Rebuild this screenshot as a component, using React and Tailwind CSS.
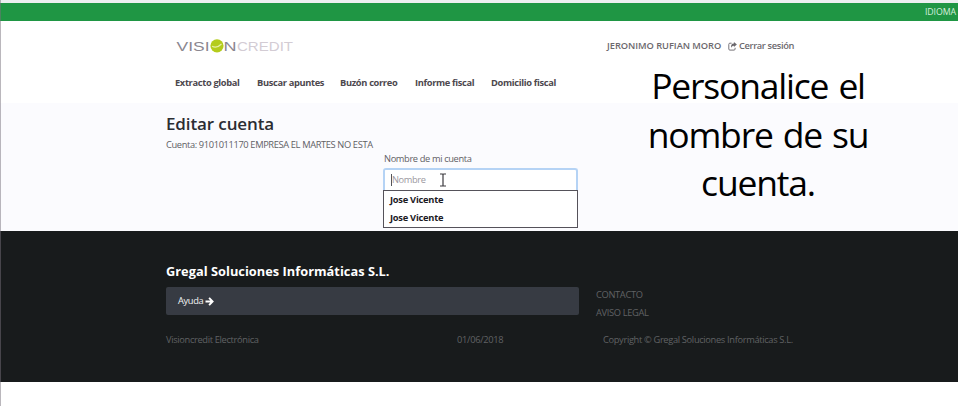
const navItems = [
  { label: "Extracto global", box: "w-[82px]" },
  { label: "Buscar apuntes", box: "w-[83px]" },
  { label: "Buzón correo", box: "w-[75px]" },
  { label: "Informe fiscal", box: "w-[76px]" },
  { label: "Domicilio fiscal", box: "w-[80px]" },
];

function Logo() {
  return (
    <svg className="block h-[20px] w-[120px]" viewBox="0 0 120 20" fontFamily="'Liberation Sans', sans-serif">
      <text x="1.5" y="14.6" fontSize="13.5" fill="#8b8790" textLength="33" lengthAdjust="spacingAndGlyphs">VISI</text>
      <circle cx="42" cy="9.8" r="6.6" fill="#b4cc1c" />
      <path d="M37 10.2 Q42 12.6 46.5 8" fill="none" stroke="#e6efa6" strokeWidth="1.2" />
      <text x="48.5" y="14.6" fontSize="13.5" fill="#8b8790" textLength="13" lengthAdjust="spacingAndGlyphs">N</text>
      <text x="62" y="14.6" fontSize="13.5" fill="#d3ccd4" textLength="56" lengthAdjust="spacingAndGlyphs">CREDIT</text>
    </svg>
  );
}

function ShareIcon() {
  return (
    <svg className="mr-[2px] h-[9px] w-[9px]" viewBox="0 0 9 9" fill="none">
      <path d="M3.6 1.2H1.9Q.8 1.2.8 2.3V7Q.8 8.1 1.9 8.1H6Q7.1 8.1 7.1 7V5.8" stroke="#77747a" strokeWidth="1" />
      <path d="M5.9 0 8.9 2.6 5.9 5.1V3.7Q4 3.6 3.3 5.7 2.3 1.8 5.9 1.5Z" fill="#6b686d" />
    </svg>
  );
}

function ArrowIcon() {
  return (
    <svg className="ml-[2px] h-[9px] w-[9px]" viewBox="0 0 9 9" fill="none" stroke="#ffffff" strokeWidth="1.9">
      <path d="M.5 4.5H7.4M4.1 .9 7.6 4.5 4.1 8.1" />
    </svg>
  );
}

function Header() {
  return (
    <header className="h-[82px] bg-white pl-[175px]">
      <div className="flex h-[50px] items-center">
        <Logo />
        <div className="ml-[312px] flex items-center text-[9.3px] font-semibold text-[#6b686d]">
          <span className="w-[121px] tracking-[-0.05px]">JERONIMO RUFIAN MORO</span>
          <ShareIcon />
          <span className="tracking-[-0.36px]">Cerrar sesión</span>
        </div>
      </div>
      <nav className="flex h-[24px] items-center text-[9.3px] font-bold tracking-[-0.34px] text-[#4d484e]">
        {navItems.map((item) => (
          <span key={item.label} className={item.box}>{item.label}</span>
        ))}
      </nav>
    </header>
  );
}

function AccountForm() {
  return (
    <main className="h-[128px] bg-[#fbfbfe] pl-[166px]">
      <h1 className="pt-[7px] text-[17px] leading-[27px] font-semibold tracking-[-0.12px] text-[#2b2d33]">Editar cuenta</h1>
      <p className="h-[15px] text-[9.3px] leading-[16px] tracking-[-0.37px] text-[#5f6065]">Cuenta: 9101011170 EMPRESA EL MARTES NO ESTA</p>
      <div className="ml-[217px] w-[195px]">
        <label className="block h-[16px] pl-px text-[9.3px] leading-[13px] tracking-[-0.37px] text-[#5f6065]">Nombre de mi cuenta</label>
        <div className="relative flex h-[22px] items-center rounded-t-[3px] border-2 border-b-0 border-[#b5d3f5] bg-white pl-[6px]">
          <span className="h-[12px] w-px bg-[#55555a]" />
          <span className="text-[9.3px] tracking-[-0.4px] text-[#9b98a0]">Nombre</span>
          <svg className="absolute top-[3px] left-[54px] h-[14px] w-[8px]" viewBox="0 0 8 14" fill="none" stroke="#3c3a3f" strokeWidth="1.2">
            <path d="M1 1h2.2q.8 0 .8.8 0-.8.8-.8H7M4 1.5v11M1 13h2.2q.8 0 .8-.8 0 .8.8.8H7" />
          </svg>
        </div>
        <ul className="h-[38px] border border-[#55525a] bg-white pl-[6px] text-[9.3px] leading-[18px] font-bold tracking-[-0.25px] text-[#1c1a1f]">
          <li>Jose Vicente</li>
          <li>Jose Vicente</li>
        </ul>
      </div>
    </main>
  );
}

function Footer() {
  return (
    <footer className="h-[151px] bg-[#181b1c] pt-[30px] pl-[166px] text-[9.3px] tracking-[-0.34px] text-[#606264]">
      <h2 className="h-[26px] text-[12.8px] leading-[21px] font-bold tracking-[0.02px] text-white">Gregal Soluciones Informáticas S.L.</h2>
      <div className="flex">
        <div className="flex h-[28px] w-[413px] items-center rounded-[2px] bg-[#373b43] pl-[12px] text-[#f2f3f4]">
          <span>Ayuda</span>
          <ArrowIcon />
        </div>
        <div className="-mt-px ml-[17px] leading-[18px]">
          <div>CONTACTO</div>
          <div>AVISO LEGAL</div>
        </div>
      </div>
      <div className="mt-[9px] flex leading-[18px]">
        <span className="w-[291px]">Visioncredit Electrónica</span>
        <span className="w-[146px] tracking-[-0.3px]">01/06/2018</span>
        <span>Copyright © Gregal Soluciones Informáticas S.L.</span>
      </div>
    </footer>
  );
}

export default function App() {
  return (
    <div className="relative h-[406px] w-[958px] overflow-hidden bg-white font-['Open_Sans','Noto_Sans',sans-serif] whitespace-nowrap">
      <div className="h-[3px] bg-[#eceff0]" />
      <div className="flex h-[18px] items-center justify-end bg-[#1f9644] pt-px pr-[2px] text-[8.8px] tracking-[-0.1px] text-[#d6eedd]">IDIOMA</div>
      <Header />
      <AccountForm />
      <Footer />
      <p className="absolute top-[61px] left-[638px] w-[240px] text-center text-[35.5px] leading-[48.5px] tracking-[-1.2px] [word-spacing:2px] text-black">
        Personalice el<br />nombre de su<br />cuenta.
      </p>
      <div className="absolute top-0 left-0 h-full w-px bg-[#76707a]/50" />
    </div>
  );
}
